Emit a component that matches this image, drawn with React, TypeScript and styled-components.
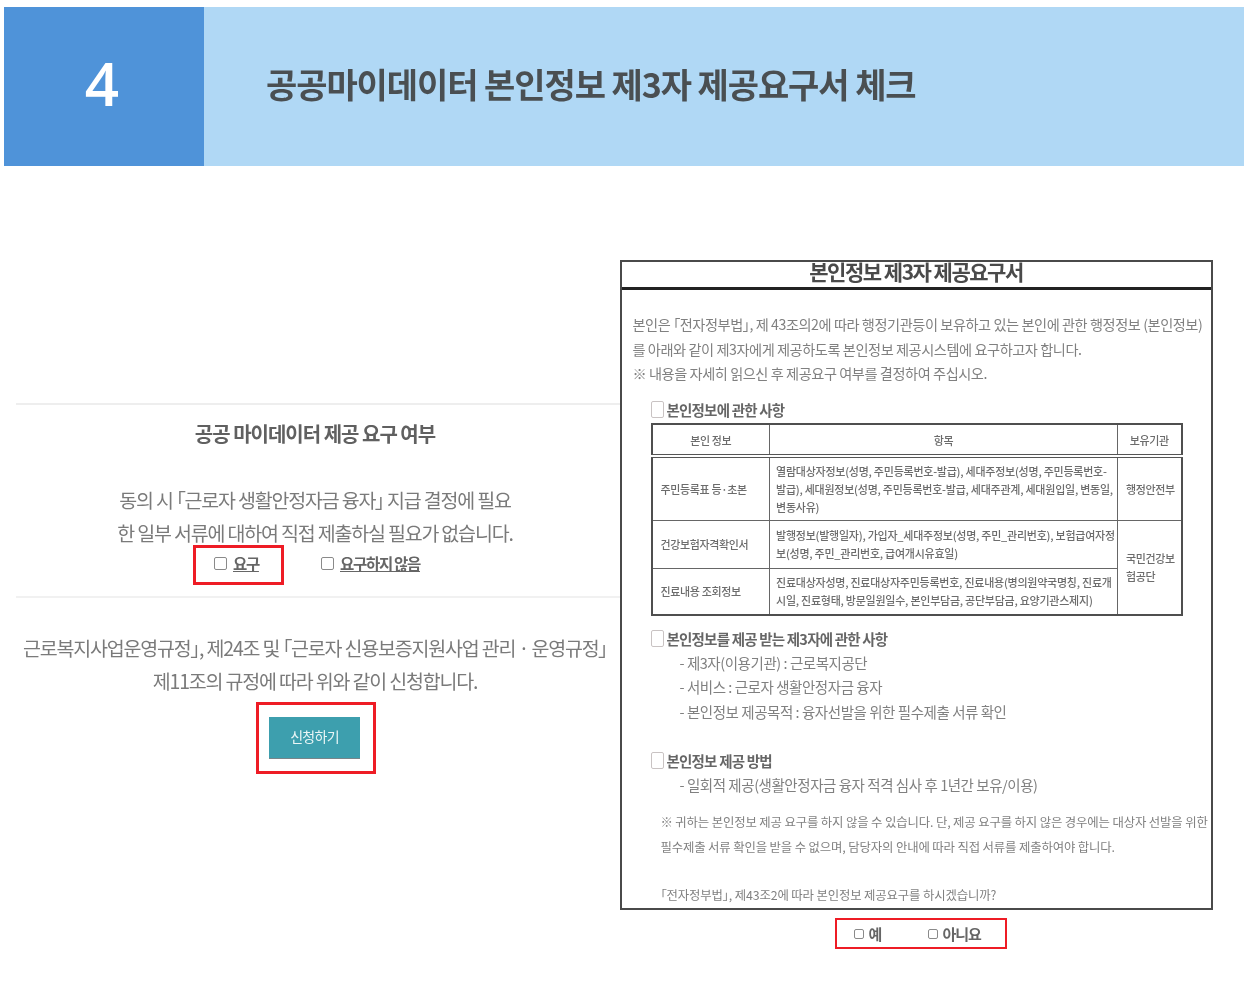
import styled, { createGlobalStyle } from 'styled-components'

const GlobalStyle = createGlobalStyle`
    html, body {
        margin: 0;
        padding: 0;
        background: #FFFFFF;
    }
    body {
        font-family: "Noto Sans CJK KR", "Noto Sans", sans-serif;
        color: #5c5c5c;
    }
`

const Page = styled.div`
    width: 1248px;
    height: 988px;
    overflow: hidden;
    box-sizing: border-box;
    padding: 7px 4px 0;
    filter: blur(0.7px);
`

const Header = styled.header`
    display: flex;
    height: 159px;
    background-color: #B0D8F5;
`

const StepNumber = styled.div`
    width: 200px;
    display: flex;
    align-items: center;
    justify-content: center;
    box-sizing: border-box;
    padding: 0 4px 7px 0;
    background-color: #4F93D9;
    color: #FFFFFF;
    font-family: "Open Sans", sans-serif;
    font-size: 60px;
    font-weight: 600;
`

const HeaderTitle = styled.h1`
    margin: 0 0 0 62px;
    align-self: center;
    font-size: 34px;
    font-weight: 700;
    letter-spacing: -1.08px;
    color: #4a4f52;
    line-height: 1;
    padding-bottom: 6px;
`

const Content = styled.div`
    display: flex;
    padding: 94px 0 0 12px;
`

const LeftColumn = styled.section`
    width: 604px;
    padding-top: 143px;
    text-align: center;
`

const ConsentBlock = styled.div`
    border-top: 2px solid #eeeeee;
    height: 193px;
    padding-top: 14px;
    box-sizing: border-box;
`

const ConsentTitle = styled.h2`
    margin: 0 6px 34px 0;
    font-size: 20px;
    line-height: 30px;
    font-weight: 700;
    letter-spacing: -1px;
    color: #606060;
`

const BodyText = styled.p`
    margin: 0 6px 0 0;
    font-size: 19.5px;
    line-height: 33px;
    font-weight: 400;
    letter-spacing: -1.18px;
    color: #7a7a7a;
    white-space: nowrap;
    font-feature-settings: "palt";
`

const ChoiceRow = styled.div`
    display: flex;
    align-items: center;
    height: 40px;
    padding-left: 177px;
    margin-top: -4px;
`

const RedBox = styled.div`
    display: flex;
    align-items: center;
    box-sizing: border-box;
    border: 3px solid #ee1c25;
`

const ConsentYes = styled(RedBox)`
    width: 91px;
    height: 40px;
    padding-left: 18px;
    margin-right: 37px;
`

const Choice = styled.label`
    display: flex;
    align-items: center;
    gap: 6px;
    padding-bottom: 4px;
    font-size: 15.5px;
    font-weight: 700;
    letter-spacing: -1.3px;
    color: #666666;
    text-decoration: underline;
`

const Check = styled.input.attrs({ type: 'checkbox' })<{ $size?: number; $tall?: number; $pale?: boolean }>`
    appearance: none;
    margin: 0;
    flex: none;
    box-sizing: border-box;
    width: ${p => p.$size ?? 13}px;
    height: ${p => p.$tall ?? p.$size ?? 13}px;
    background: #ffffff;
    border: 1px solid ${p => (p.$pale ? '#c9c3c3' : '#8a8a8a')};
    border-radius: 2px;
`

const ApplyBlock = styled.div`
    border-top: 2px solid #f1f1f1;
    padding-top: 33px;
`

const ApplyBox = styled(RedBox)`
    justify-content: center;
    width: 120px;
    height: 72px;
    margin: 5px auto 0 240px;
    padding-right: 3px;
`

const ApplyButton = styled.button`
    width: 91px;
    height: 42px;
    border: none;
    border-bottom: 1px solid #77858a;
    background-color: #3D9FAE;
    color: #EAF6F6;
    font-family: inherit;
    font-size: 14px;
    letter-spacing: -0.7px;
    padding: 0 0 3px;
`

const RightColumn = styled.section`
    width: 592px;
    display: flex;
    flex-direction: column;
    align-items: center;
`

const DocumentSheet = styled.article`
    width: 593px;
    height: 650px;
    flex: none;
    box-sizing: border-box;
    border: 2px solid #4a4a4a;
`

const DocumentTitle = styled.h2`
    margin: 0;
    height: 25px;
    border-bottom: 3px solid #222222;
    text-align: center;
    font-size: 21px;
    line-height: 19px;
    font-weight: 700;
    letter-spacing: -1.5px;
    color: #4a4a4a;
`

const Intro = styled.p`
    margin: 22px 0 0 11px;
    font-size: 14.2px;
    line-height: 24.5px;
    letter-spacing: -0.44px;
    color: #808080;
    white-space: nowrap;
    font-feature-settings: "palt";
`

const Section = styled.div<{ $gap?: number }>`
    margin: ${p => p.$gap ?? 0}px 0 0 29px;
`

const SectionTitle = styled.h3`
    display: flex;
    align-items: center;
    gap: 3px;
    margin: 0;
    height: 24.5px;
    font-size: 14.5px;
    font-weight: 700;
    letter-spacing: -0.8px;
    color: #666666;
    white-space: nowrap;
`

const SectionItem = styled.p`
    margin: 0;
    padding-left: 29px;
    font-size: 14.5px;
    line-height: 24.5px;
    letter-spacing: -0.45px;
    color: #808080;
    white-space: nowrap;
`

const InfoTable = styled.table`
    width: 530px;
    margin-top: 1px;
    border-collapse: collapse;
    table-layout: fixed;
    border: 2px solid #4f4f4f;
    font-size: 11px;
    font-weight: 500;
    letter-spacing: -0.36px;
    color: #6c6c6c;

    th, td {
        border: 1px solid #666666;
        padding: 0;
        font-weight: 500;
        white-space: nowrap;
    }
    th {
        text-align: center;
    }
    thead tr {
        height: 32px;
        border-bottom: 4px double #555555;
    }
`

const LabelCell = styled.td`
    text-align: left;
    padding-left: 8px !important;
`

const DetailCell = styled.td`
    text-align: left;
    padding-left: 6px !important;
    line-height: 18px;
    letter-spacing: -0.24px;
`

const AgencyCell = styled.td`
    text-align: left;
    padding-left: 8px !important;
    line-height: 18px;
`

const TableRow = styled.tr<{ $height: number }>`
    height: ${p => p.$height}px;
`

const Note = styled.p<{ $gap?: number }>`
    margin: ${p => p.$gap ?? 0}px 0 0 39px;
    font-size: 12.4px;
    line-height: 24.5px;
    letter-spacing: -0.15px;
    color: #808080;
    white-space: nowrap;
    font-feature-settings: "palt";
`

const AnswerBox = styled(RedBox)`
    width: 172px;
    height: 31px;
    margin: 8px 0 0 9px;
    padding-left: 17px;
    border-width: 2px;
`

const Answer = styled.label<{ $width: number }>`
    display: flex;
    align-items: center;
    gap: 5px;
    width: ${p => p.$width}px;
    font-size: 15px;
    font-weight: 700;
    letter-spacing: -1px;
    color: #666666;
`

function App() {
    return (
        <Page>
            <GlobalStyle />
            <Header>
                <StepNumber>4</StepNumber>
                <HeaderTitle>공공마이데이터 본인정보 제3자 제공요구서 체크</HeaderTitle>
            </Header>
            <Content>
                <LeftColumn>
                    <ConsentBlock>
                        <ConsentTitle>공공 마이데이터 제공 요구 여부</ConsentTitle>
                        <BodyText>동의 시 「근로자 생활안정자금 융자」 지급 결정에 필요</BodyText>
                        <BodyText>한 일부 서류에 대하여 직접 제출하실 필요가 없습니다.</BodyText>
                        <ChoiceRow>
                            <ConsentYes>
                                <Choice><Check />요구</Choice>
                            </ConsentYes>
                            <Choice><Check />요구하지 않음</Choice>
                        </ChoiceRow>
                    </ConsentBlock>
                    <ApplyBlock>
                        <BodyText>근로복지사업운영규정」, 제24조 및 「근로자 신용보증지원사업 관리 · 운영규정」</BodyText>
                        <BodyText>제11조의 규정에 따라 위와 같이 신청합니다.</BodyText>
                        <ApplyBox>
                            <ApplyButton>신청하기</ApplyButton>
                        </ApplyBox>
                    </ApplyBlock>
                </LeftColumn>
                <RightColumn>
                    <DocumentSheet>
                        <DocumentTitle>본인정보 제3자 제공요구서</DocumentTitle>
                        <Intro>
                            본인은 「전자정부법」, 제 43조의2에 따라 행정기관등이 보유하고 있는 본인에 관한 행정정보 (본인정보)<br />
                            를 아래와 같이 제3자에게 제공하도록 본인정보 제공시스템에 요구하고자 합니다.<br />
                            ※ 내용을 자세히 읽으신 후 제공요구 여부를 결정하여 주십시오.
                        </Intro>
                        <Section $gap={12}>
                            <SectionTitle><Check $size={13} $tall={17} $pale />본인정보에 관한 사항</SectionTitle>
                            <InfoTable>
                                <colgroup>
                                    <col width="118" />
                                    <col width="348" />
                                    <col width="64" />
                                </colgroup>
                                <thead>
                                    <tr>
                                        <th>본인 정보</th>
                                        <th>항목</th>
                                        <th>보유기관</th>
                                    </tr>
                                </thead>
                                <tbody>
                                    <TableRow $height={64}>
                                        <LabelCell>주민등록표 등·초본</LabelCell>
                                        <DetailCell>
                                            열람대상자정보(성명, 주민등록번호-발급), 세대주정보(성명, 주민등록번호-<br />
                                            발급), 세대원정보(성명, 주민등록번호-발급, 세대주관계, 세대원입일, 변동일,<br />
                                            변동사유)
                                        </DetailCell>
                                        <AgencyCell>행정안전부</AgencyCell>
                                    </TableRow>
                                    <TableRow $height={48}>
                                        <LabelCell>건강보험자격확인서</LabelCell>
                                        <DetailCell>
                                            발행정보(발행일자), 가입자_세대주정보(성명, 주민_관리번호), 보험급여자정<br />
                                            보(성명, 주민_관리번호, 급여개시유효일)
                                        </DetailCell>
                                        <AgencyCell rowSpan={2}>국민건강보<br />험공단</AgencyCell>
                                    </TableRow>
                                    <TableRow $height={47}>
                                        <LabelCell>진료내용 조회정보</LabelCell>
                                        <DetailCell>
                                            진료대상자성명, 진료대상자주민등록번호, 진료내용(병의원약국명칭, 진료개<br />
                                            시일, 진료형태, 방문일원일수, 본인부담금, 공단부담금, 요양기관스제지)
                                        </DetailCell>
                                    </TableRow>
                                </tbody>
                            </InfoTable>
                        </Section>
                        <Section $gap={10}>
                            <SectionTitle><Check $size={13} $tall={17} $pale />본인정보를 제공 받는 제3자에 관한 사항</SectionTitle>
                            <SectionItem>- 제3자(이용기관) : 근로복지공단</SectionItem>
                            <SectionItem>- 서비스 : 근로자 생활안정자금 융자</SectionItem>
                            <SectionItem>- 본인정보 제공목적 : 융자선발을 위한 필수제출 서류 확인</SectionItem>
                        </Section>
                        <Section $gap={24}>
                            <SectionTitle><Check $size={13} $tall={17} $pale />본인정보 제공 방법</SectionTitle>
                            <SectionItem>- 일회적 제공(생활안정자금 융자 적격 심사 후 1년간 보유/이용)</SectionItem>
                        </Section>
                        <Note $gap={13}>
                            ※ 귀하는 본인정보 제공 요구를 하지 않을 수 있습니다. 단, 제공 요구를 하지 않은 경우에는 대상자 선발을 위한<br />
                            필수제출 서류 확인을 받을 수 없으며, 담당자의 안내에 따라 직접 서류를 제출하여야 합니다.
                        </Note>
                        <Note $gap={24}>「전자정부법」, 제43조2에 따라 본인정보 제공요구를 하시겠습니까?</Note>
                    </DocumentSheet>
                    <AnswerBox>
                        <Answer $width={74}><Check $size={10} />예</Answer>
                        <Answer $width={70}><Check $size={10} />아니요</Answer>
                    </AnswerBox>
                </RightColumn>
            </Content>
        </Page>
    )
}

export default App
